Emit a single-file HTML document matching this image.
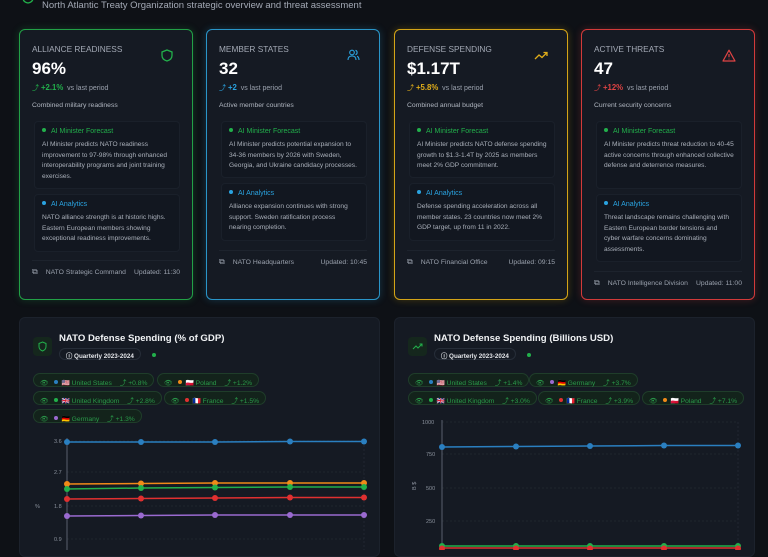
<!DOCTYPE html>
<html><head><meta charset="utf-8"><style>
*{box-sizing:border-box;margin:0;padding:0}
body{width:768px;height:550px;overflow:hidden;background:#0e1116;font-family:"Liberation Sans",sans-serif;color:#e5e7eb;position:relative}
.a{position:absolute}
.card{position:absolute;top:29px;width:174px;height:271px;background:#151a23;border:1.5px solid;border-radius:6px}
.t{position:absolute;left:12px;top:14px;font-size:8.3px;color:#a3a9b5}
.v{position:absolute;left:12px;top:29px;font-size:17px;font-weight:bold;color:#fff}
.ch{position:absolute;left:12px;top:53px;font-size:7px;color:#9aa1ad}
.ch b{font-size:7.8px}
.d{position:absolute;left:12px;top:72px;font-size:6.8px;color:#b0b6c0}
.box{position:absolute;left:14px;width:146px;background:#121720;border:1px solid #1a202a;border-radius:4px;padding:6px 7px}
.box h4{font-size:7px;font-weight:normal;margin-bottom:5px}
.box h4:before{content:"";display:inline-block;width:4px;height:4px;border-radius:50%;background:currentColor;margin-right:5px;vertical-align:1px}
.box p{font-size:6.6px;line-height:10.5px;color:#aab0ba}
.g{color:#22b04b}.bl{color:#2aa3e0}
.ft{position:absolute;left:12px;right:12px;font-size:6.8px;line-height:10px;color:#9aa1ad;border-top:1px solid #1d232d;padding-top:6px;display:flex;justify-content:space-between;align-items:center;white-space:nowrap}
.ft span:first-child:before{content:"⧉";margin-right:8px;font-size:8px;line-height:10px}
.panel{position:absolute;top:317px;width:361px;height:240px;background:#151a23;border:1px solid #1c222c;border-radius:6px}
.ib{position:absolute;left:13px;top:19px;width:19px;height:19px;background:#15271d;border-radius:4px}
.pt{position:absolute;left:39px;top:15px;font-size:9.6px;font-weight:bold;color:#f1f3f5}
.bdg{position:absolute;left:39px;top:30px;height:12px;border:1px solid #262d38;border-radius:6px;font-size:6.3px;font-weight:bold;padding:2px 6px;color:#e5e7eb}
.gd{position:absolute;top:35px;width:4px;height:4px;border-radius:50%;background:#22b04b}
.pill{position:absolute;height:14px;border:1px solid #1f3d2a;background:#13231b;border-radius:7px;font-size:6.7px;color:#2a9a4a;padding:3px 6px;white-space:nowrap}
.pill i{display:inline-block;width:4px;height:4px;border-radius:50%;margin:0 4px 0 5px;vertical-align:1px}
.pill em{font-style:normal;margin-left:6px}
.ax{font-size:5.5px;fill:#8a919c;font-family:"Liberation Sans",sans-serif}
</style></head><body>
<svg class="a" style="left:22px;top:-8px" width="12" height="12" viewBox="0 0 12 12"><path d="M6 1 L11 3 V6 C11 9 8.5 10.5 6 11 C3.5 10.5 1 9 1 6 V3 Z" fill="none" stroke="#22b04b" stroke-width="1.3"/></svg>
<div class="a" style="left:42px;top:0px;font-size:9.5px;color:#a3a9b5">North Atlantic Treaty Organization strategic overview and threat assessment</div>

<div class="card" style="left:19px;border-color:#22a046;box-shadow:0 0 8px rgba(34,176,75,.25)">
<div class="t">ALLIANCE READINESS</div>
<svg class="a" style="left:141px;top:19px" width="12" height="13" viewBox="0 0 12 13"><path d="M6 1 L11 3 V6.5 C11 9.5 8.5 11.3 6 12 C3.5 11.3 1 9.5 1 6.5 V3 Z" fill="none" stroke="#22b04b" stroke-width="1.3"/></svg>
<div class="v">96%</div>
<div class="ch"><span class="g">⤴ <b>+2.1%</b></span>&nbsp; vs last period</div>
<div class="d">Combined military readiness</div>
<div class="box" style="top:91px;height:68px"><h4 class="g">AI Minister Forecast</h4><p>AI Minister predicts NATO readiness improvement to 97-98% through enhanced interoperability programs and joint training exercises.</p></div>
<div class="box" style="top:164px;height:58px"><h4 class="bl">AI Analytics</h4><p>NATO alliance strength is at historic highs. Eastern European members showing exceptional readiness improvements.</p></div>
<div class="ft" style="top:230px"><span>NATO Strategic Command</span><span>Updated: 11:30</span></div>
</div>

<div class="card" style="left:206px;border-color:#2a95c8;box-shadow:0 0 8px rgba(42,163,224,.25)">
<div class="t">MEMBER STATES</div>
<svg class="a" style="left:140px;top:19px" width="13" height="12" viewBox="0 0 13 12"><circle cx="5" cy="3.5" r="2.3" fill="none" stroke="#2aa3e0" stroke-width="1.1"/><path d="M1 11 C1 8 3 7 5 7 C7 7 9 8 9 11 M8.5 1.3 A2.3 2.3 0 0 1 8.5 5.7 M10 7.3 C11.5 7.8 12 9 12 11" fill="none" stroke="#2aa3e0" stroke-width="1.1"/></svg>
<div class="v">32</div>
<div class="ch"><span class="bl">⤴ <b>+2</b></span>&nbsp; vs last period</div>
<div class="d">Active member countries</div>
<div class="box" style="top:91px;height:57px"><h4 class="g">AI Minister Forecast</h4><p>AI Minister predicts potential expansion to 34-36 members by 2026 with Sweden, Georgia, and Ukraine candidacy processes.</p></div>
<div class="box" style="top:153px;height:58px"><h4 class="bl">AI Analytics</h4><p>Alliance expansion continues with strong support. Sweden ratification process nearing completion.</p></div>
<div class="ft" style="top:220px"><span>NATO Headquarters</span><span>Updated: 10:45</span></div>
</div>

<div class="card" style="left:394px;border-color:#d4a417;box-shadow:0 0 8px rgba(234,179,8,.25)">
<div class="t">DEFENSE SPENDING</div>
<svg class="a" style="left:139px;top:21px" width="14" height="9" viewBox="0 0 14 9"><path d="M1 8 L5 4 L8 6.5 L13 1.5 M9.5 1.5 H13 V5" fill="none" stroke="#e0ad1a" stroke-width="1.3"/></svg>
<div class="v">$1.17T</div>
<div class="ch"><span style="color:#e0ad1a">⤴ <b>+5.8%</b></span>&nbsp; vs last period</div>
<div class="d">Combined annual budget</div>
<div class="box" style="top:91px;height:57px"><h4 class="g">AI Minister Forecast</h4><p>AI Minister predicts NATO defense spending growth to $1.3-1.4T by 2025 as members meet 2% GDP commitment.</p></div>
<div class="box" style="top:153px;height:58px"><h4 class="bl">AI Analytics</h4><p>Defense spending acceleration across all member states. 23 countries now meet 2% GDP target, up from 11 in 2022.</p></div>
<div class="ft" style="top:220px"><span>NATO Financial Office</span><span>Updated: 09:15</span></div>
</div>

<div class="card" style="left:581px;border-color:#d23a3a;box-shadow:0 0 8px rgba(239,68,68,.25)">
<div class="t">ACTIVE THREATS</div>
<svg class="a" style="left:140px;top:19px" width="14" height="13" viewBox="0 0 14 13"><path d="M7 1.2 L13 12 H1 Z" fill="none" stroke="#e04444" stroke-width="1.2" stroke-linejoin="round"/><path d="M7 5 V8.3 M7 9.8 V10.4" stroke="#e04444" stroke-width="1.2"/></svg>
<div class="v">47</div>
<div class="ch"><span style="color:#e04444">⤴ <b>+12%</b></span>&nbsp; vs last period</div>
<div class="d">Current security concerns</div>
<div class="box" style="top:91px;height:68px"><h4 class="g">AI Minister Forecast</h4><p>AI Minister predicts threat reduction to 40-45 active concerns through enhanced collective defense and deterrence measures.</p></div>
<div class="box" style="top:164px;height:68px"><h4 class="bl">AI Analytics</h4><p>Threat landscape remains challenging with Eastern European border tensions and cyber warfare concerns dominating assessments.</p></div>
<div class="ft" style="top:241px"><span>NATO Intelligence Division</span><span>Updated: 11:00</span></div>
</div>

<div class="panel" style="left:19px">
<div class="ib"><svg class="a" style="left:5px;top:4px" width="9" height="11" viewBox="0 0 9 11"><path d="M4.5 1 L8 2.5 V5.5 C8 8 6 9.4 4.5 10 C3 9.4 1 8 1 5.5 V2.5 Z" fill="none" stroke="#22b04b" stroke-width="1"/></svg></div>
<div class="pt">NATO Defense Spending (% of GDP)</div>
<div class="bdg">ⓘ Quarterly 2023-2024</div><div class="gd" style="left:132px"></div>
<div class="pill" style="left:13px;top:55px">👁<i style="background:#2a7fc0"></i>🇺🇸 United States <em>⤴ +0.8%</em></div>
<div class="pill" style="left:137px;top:55px">👁<i style="background:#f08a18"></i>🇵🇱 Poland <em>⤴ +1.2%</em></div>
<div class="pill" style="left:13px;top:73px">👁<i style="background:#22b04b"></i>🇬🇧 United Kingdom <em>⤴ +2.8%</em></div>
<div class="pill" style="left:144px;top:73px">👁<i style="background:#e03030"></i>🇫🇷 France <em>⤴ +1.5%</em></div>
<div class="pill" style="left:13px;top:91px">👁<i style="background:#9a6ad0"></i>🇩🇪 Germany <em>⤴ +1.3%</em></div>
</div>
<svg class="a" style="left:0;top:420px" width="384" height="130">
<g stroke="#2a303a" stroke-dasharray="2 2" stroke-width=".6"><line x1="67" x2="364" y1="21" y2="21"/><line x1="67" x2="364" y1="52" y2="52"/><line x1="67" x2="364" y1="86" y2="86"/><line x1="67" x2="364" y1="119" y2="119"/><line x1="364" x2="364" y1="21" y2="130"/></g>
<line x1="67" x2="67" y1="18" y2="130" stroke="#6b7280" stroke-width=".8"/>
<text class="ax" x="54" y="23">3.6</text><text class="ax" x="54" y="54">2.7</text><text class="ax" x="54" y="88">1.8</text><text class="ax" x="54" y="121">0.9</text><text class="ax" x="35" y="88">%</text>
<g stroke-width="1.5" fill="none"><polyline stroke="#2a7fc0" points="67,22 141,22 215,22 290,21.5 364,21.5"/><polyline stroke="#f08a18" points="67,64 141,63.5 215,63 290,63 364,63"/><polyline stroke="#22b04b" points="67,69 141,68 215,67.5 290,67 364,67"/><polyline stroke="#e03030" points="67,79 141,78.5 215,78 290,77.5 364,77.5"/><polyline stroke="#9a6ad0" points="67,96 141,95.5 215,95 290,95 364,95"/></g>
<g fill="#2a7fc0"><circle cx="67" cy="22" r="3"/><circle cx="141" cy="22" r="3"/><circle cx="215" cy="22" r="3"/><circle cx="290" cy="21.5" r="3"/><circle cx="364" cy="21.5" r="3"/></g>
<g fill="#f08a18"><circle cx="67" cy="64" r="3"/><circle cx="141" cy="63.5" r="3"/><circle cx="215" cy="63" r="3"/><circle cx="290" cy="63" r="3"/><circle cx="364" cy="63" r="3"/></g>
<g fill="#22b04b"><circle cx="67" cy="69" r="3"/><circle cx="141" cy="68" r="3"/><circle cx="215" cy="67.5" r="3"/><circle cx="290" cy="67" r="3"/><circle cx="364" cy="67" r="3"/></g>
<g fill="#e03030"><circle cx="67" cy="79" r="3"/><circle cx="141" cy="78.5" r="3"/><circle cx="215" cy="78" r="3"/><circle cx="290" cy="77.5" r="3"/><circle cx="364" cy="77.5" r="3"/></g>
<g fill="#9a6ad0"><circle cx="67" cy="96" r="3"/><circle cx="141" cy="95.5" r="3"/><circle cx="215" cy="95" r="3"/><circle cx="290" cy="95" r="3"/><circle cx="364" cy="95" r="3"/></g>
</svg>

<div class="panel" style="left:394px">
<div class="ib"><svg class="a" style="left:4px;top:6px" width="11" height="7" viewBox="0 0 11 7"><path d="M1 6 L4 3 L6 5 L10 1 M7.5 1 H10 V3.5" fill="none" stroke="#22b04b" stroke-width="1"/></svg></div>
<div class="pt">NATO Defense Spending (Billions USD)</div>
<div class="bdg">ⓘ Quarterly 2023-2024</div><div class="gd" style="left:132px"></div>
<div class="pill" style="left:13px;top:55px">👁<i style="background:#2a7fc0"></i>🇺🇸 United States <em>⤴ +1.4%</em></div>
<div class="pill" style="left:134px;top:55px">👁<i style="background:#9a6ad0"></i>🇩🇪 Germany <em>⤴ +3.7%</em></div>
<div class="pill" style="left:13px;top:73px">👁<i style="background:#22b04b"></i>🇬🇧 United Kingdom <em>⤴ +3.0%</em></div>
<div class="pill" style="left:143px;top:73px">👁<i style="background:#e03030"></i>🇫🇷 France <em>⤴ +3.9%</em></div>
<div class="pill" style="left:247px;top:73px">👁<i style="background:#f08a18"></i>🇵🇱 Poland <em>⤴ +7.1%</em></div>
</div>
<svg class="a" style="left:384px;top:410px" width="384" height="140">
<g stroke="#2a303a" stroke-dasharray="2 2" stroke-width=".6"><line x1="58" x2="354" y1="12" y2="12"/><line x1="58" x2="354" y1="44" y2="44"/><line x1="58" x2="354" y1="78" y2="78"/><line x1="58" x2="354" y1="111" y2="111"/><line x1="354" x2="354" y1="12" y2="140"/></g>
<line x1="58" x2="58" y1="10" y2="140" stroke="#6b7280" stroke-width=".8"/>
<text class="ax" x="38" y="14">1000</text><text class="ax" x="42" y="46">750</text><text class="ax" x="42" y="80">500</text><text class="ax" x="42" y="113">250</text><text class="ax" x="28" y="80" transform="rotate(-90 30 78)">B $</text>
<polyline stroke="#2a7fc0" stroke-width="1.5" fill="none" points="58,37 132,36.5 206,36 280,35.5 354,35.5"/>
<g fill="#2a7fc0"><circle cx="58" cy="37" r="3"/><circle cx="132" cy="36.5" r="3"/><circle cx="206" cy="36" r="3"/><circle cx="280" cy="35.5" r="3"/><circle cx="354" cy="35.5" r="3"/></g>
<polyline stroke="#22b04b" stroke-width="1.5" fill="none" points="58,136 354,136"/>
<polyline stroke="#e03030" stroke-width="1.5" fill="none" points="58,138 354,138"/>
<g fill="#22b04b"><circle cx="58" cy="136" r="3"/><circle cx="132" cy="136" r="3"/><circle cx="206" cy="136" r="3"/><circle cx="280" cy="136" r="3"/><circle cx="354" cy="136" r="3"/></g>
<g fill="#e03030"><circle cx="58" cy="138.5" r="3"/><circle cx="132" cy="138.5" r="3"/><circle cx="206" cy="138.5" r="3"/><circle cx="280" cy="138.5" r="3"/><circle cx="354" cy="138.5" r="3"/></g>
</svg>
</body></html>
